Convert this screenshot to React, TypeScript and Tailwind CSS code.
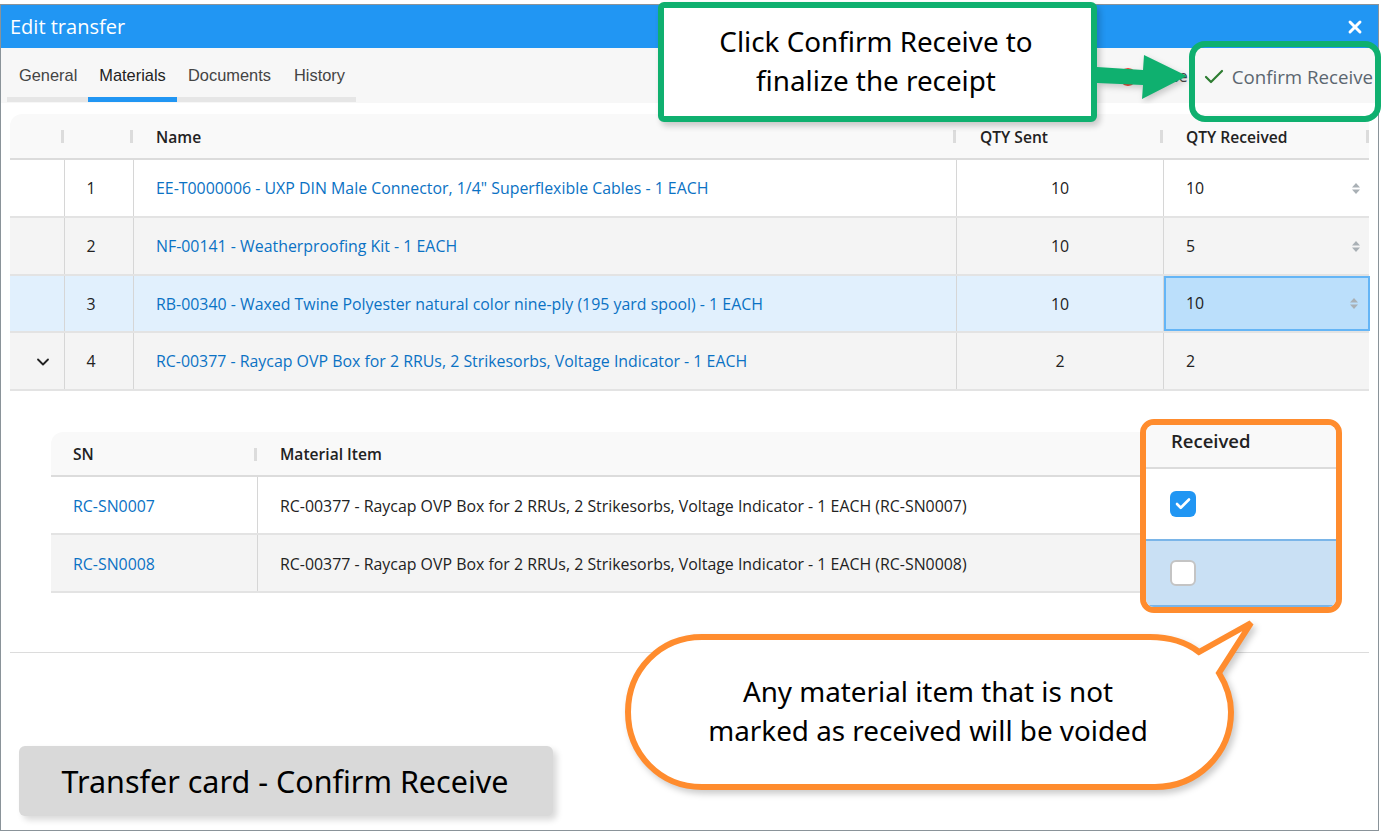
import { Check, ChevronDown, X } from "lucide-react";

const uiFont = "[font-family:'Open_Sans','Noto_Sans',sans-serif]";
const calloutFont = "[font-family:'Noto_Sans','Open_Sans',sans-serif]";

const materials = [
  { no: 1, name: 'EE-T0000006 - UXP DIN Male Connector, 1/4" Superflexible Cables - 1 EACH', sent: 10, received: 10, bg: "bg-white", height: "h-[58px]", pad: "pt-[1px]", spin: true },
  { no: 2, name: "NF-00141 - Weatherproofing Kit - 1 EACH", sent: 10, received: 5, bg: "bg-[#f4f4f4]", height: "h-[58px]", pad: "pt-[1px]", spin: true },
  { no: 3, name: "RB-00340 - Waxed Twine Polyester natural color nine-ply (195 yard spool) - 1 EACH", sent: 10, received: 10, bg: "bg-[#e1f0fd]", height: "h-[57px]", pad: "pt-[3px]", spin: true, editing: true },
  { no: 4, name: "RC-00377 - Raycap OVP Box for 2 RRUs, 2 Strikesorbs, Voltage Indicator - 1 EACH", sent: 2, received: 2, bg: "bg-[#f4f4f4]", height: "h-[58px]", pad: "pt-[1px]", expanded: true },
];

const items = [
  { sn: "RC-SN0007", label: "RC-00377 - Raycap OVP Box for 2 RRUs, 2 Strikesorbs, Voltage Indicator - 1 EACH (RC-SN0007)", bg: "bg-white" },
  { sn: "RC-SN0008", label: "RC-00377 - Raycap OVP Box for 2 RRUs, 2 Strikesorbs, Voltage Indicator - 1 EACH (RC-SN0008)", bg: "bg-[#f4f4f4]" },
];

function Spinner() {
  return (
    <svg width="8" height="11" viewBox="0 0 8 11" className="fill-[#a9b0b5]">
      <path d="M4 0 8 4.5H0Z" />
      <path d="M0 6.5H8L4 11Z" />
    </svg>
  );
}

function HeaderDivider() {
  return <span className="absolute right-[1px] top-[16px] h-[13px] w-[3px] bg-[#dcdcdc]" />;
}

export default function App() {
  return (
    <div className={`relative h-[831px] w-[1381px] overflow-hidden bg-white pt-[4px] text-[15.9px] text-[#222] ${uiFont}`}>
      {/* 窓 */}
      <div className="h-[827px] w-[1379px] border border-[#8a9399] bg-white">
        <div className="flex h-[43px] items-center justify-between bg-[#2196f3] pl-[9px] pr-[13px] text-white">
          <span className="text-[20px] leading-none">Edit transfer</span>
          <X size={20} strokeWidth={3.5} />
        </div>

        {/* タブ */}
        <div className="flex h-[55px] items-start justify-between bg-[#f7f7f7] pl-[6px]">
          <div className="flex h-[54px] border-b-[5px] border-[#e6e6e6] pt-[15px] text-[16.4px] text-[#444] [font-family:'Liberation_Sans',sans-serif]">
            <span className="-mb-[5px] w-[81px] pl-[12px]">General</span>
            <span className="-mb-[5px] h-[39px] w-[89px] border-b-[5px] border-[#2196f3] text-center text-[#222]">Materials</span>
            <span className="w-[106px] pl-[11px]">Documents</span>
            <span className="w-[73px] pl-[11px]">History</span>
          </div>
          <div className="flex items-center pr-[5px] pt-[17px]">
            <span className="mr-[11px] h-[18px] w-[18px] rounded-full border-2 border-[#f44336]" />
            <span className="mr-[14px] text-[#444]">Close</span>
            <Check size={24} strokeWidth={2.2} className="mr-[6px] text-[#2e7d32]" />
            <span className="text-[18.7px] leading-none text-[#5b6670]">Confirm Receive</span>
          </div>
        </div>

        <div className="px-[9px] pt-[11px]">
          {/* 資材テーブル */}
          <div className="grid h-[46px] grid-cols-[55px_69px_823px_207px_206px] rounded-t-xl border-b-2 border-[#dcdcdc] bg-[#f9f9f9] text-[15.6px] font-semibold">
            <div className="relative"><HeaderDivider /></div>
            <div className="relative"><HeaderDivider /></div>
            <div className="relative flex items-center pl-[22px] pt-[3px]">Name<HeaderDivider /></div>
            <div className="relative flex items-center pl-[23px] pt-[3px]">QTY Sent<HeaderDivider /></div>
            <div className="relative flex items-center pl-[22px] pt-[3px]">QTY Received<HeaderDivider /></div>
          </div>
          {materials.map((row) => (
            <div key={row.no} className={`grid grid-cols-[55px_69px_823px_207px_206px] border-b-2 border-[#e3e3e3] ${row.height} ${row.bg}`}>
              <div className={`flex items-center justify-center border-r border-[#d6d6d6] ${row.pad}`}>
                {row.expanded && <ChevronDown size={20} strokeWidth={2.2} className="ml-[12px]" />}
              </div>
              <div className={`flex items-center justify-center border-r border-[#d6d6d6] pr-[16px] ${row.pad}`}>{row.no}</div>
              <div className={`flex items-center border-r border-[#d6d6d6] pl-[22px] text-[#0b72c4] ${row.pad}`}>{row.name}</div>
              <div className={`flex items-center justify-center border-r border-[#d6d6d6] ${row.pad}`}>{row.sent}</div>
              <div className={`flex items-center justify-between pr-[10px] ${row.editing ? "border-2 border-[#64b5f6] bg-[#bbdffb] pl-[20px]" : `pl-[22px] ${row.pad}`}`}>
                <span>{row.received}</span>
                {row.spin && <Spinner />}
              </div>
            </div>
          ))}

          {/* シリアル番号テーブル */}
          <div className="ml-[41px] mt-[41px] w-[1090px]">
            <div className="grid h-[45px] grid-cols-[207px_883px] rounded-tl-xl border-b-2 border-[#dcdcdc] bg-[#f9f9f9] text-[15.6px] font-semibold">
              <div className="relative flex items-center pl-[22px] pt-[2px]">SN<HeaderDivider /></div>
              <div className="flex items-center pl-[22px] pt-[2px]">Material Item</div>
            </div>
            {items.map((item) => (
              <div key={item.sn} className={`grid h-[58px] grid-cols-[207px_883px] border-b-2 border-[#e3e3e3] ${item.bg}`}>
                <div className="flex items-center border-r border-[#d6d6d6] pl-[22px] pt-[3px] text-[#0b72c4]">{item.sn}</div>
                <div className="flex items-center pl-[22px] pt-[3px]">{item.label}</div>
              </div>
            ))}
          </div>

          <div className="mt-[59px] border-t border-[#dcdcdc]" />
        </div>
      </div>

      {/* 注釈 */}
      <div className={`absolute left-[658px] top-[2px] flex h-[120px] w-[439px] items-center justify-center rounded-[6px] border-[6px] border-[#0fb06f] bg-white pb-[2px] pr-[3px] text-center text-[27.8px] leading-[39px] text-black shadow-[3px_4px_6px_rgba(0,0,0,0.2)] ${calloutFont}`}>
        <span>Click Confirm Receive to<br />finalize the receipt</span>
      </div>

      <svg className="absolute left-[1097px] top-[50px]" width="96" height="54" viewBox="0 0 96 54">
        <path d="M0 17 46 20 47 5 90 26 45 49 46 35 0 33Z" fill="#0fb06f" className="drop-shadow-[2px_3px_3px_rgba(0,0,0,0.2)]" />
      </svg>

      <div className="absolute left-[1189px] top-[41px] h-[81px] w-[192px] rounded-[16px] border-[6px] border-[#0fb06f]" />

      <div className="absolute left-[1140px] top-[419px] w-[202px] overflow-hidden rounded-[14px] border-[6px] border-[#ff8c2e] bg-white">
        <div className="flex h-[44px] items-center border-b-2 border-[#dcdcdc] bg-[#f9f9f9] pb-[11px] pl-[25px] text-[18.5px] font-semibold">Received</div>
        <div className="flex h-[70px] items-center pl-[24px]">
          <span className="flex h-[26px] w-[26px] items-center justify-center rounded-[6px] bg-[#2196f3]">
            <Check size={18} strokeWidth={3.5} className="text-white" />
          </span>
        </div>
        <div className="flex h-[68px] items-center border-y-2 border-[#7ab5e8] bg-[#c9e0f4] pl-[24px]">
          <span className="h-[26px] w-[26px] rounded-[6px] border-2 border-[#c4c4c4] bg-white" />
        </div>
      </div>

      <svg className="absolute left-[620px] top-[615px]" width="650" height="190" viewBox="620 615 650 190">
        <path
          d="M702 637H1150C1170 637 1186 642 1199 652L1251 623 1219 673C1227 686 1231 698 1231 712 1231 754 1197 787 1155 787H702C660 787 628 754 628 712 628 670 660 637 702 637Z"
          fill="#fff"
          stroke="#ff8c2e"
          strokeWidth="6"
          className="drop-shadow-[3px_4px_3px_rgba(0,0,0,0.2)]"
        />
      </svg>
      <div className={`absolute left-[628px] top-[672px] w-[600px] text-center text-[27.8px] leading-[39px] text-black ${calloutFont}`}>
        Any material item that is not<br />marked as received will be voided
      </div>

      <div className={`absolute left-[19px] top-[746px] flex h-[70px] w-[534px] items-center justify-center rounded-[6px] bg-[#d9d9d9] pr-[2px] pt-[2px] text-[30.5px] text-black shadow-[4px_4px_6px_rgba(0,0,0,0.15)] ${calloutFont}`}>
        Transfer card - Confirm Receive
      </div>
    </div>
  );
}
